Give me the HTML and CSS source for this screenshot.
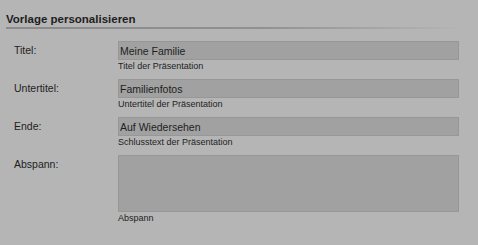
FILE: index.html
```html
<!DOCTYPE html>
<html>
    <link rel="stylesheet" href="styles.css">
    <head>
        <title>Vorlage personalisieren</title>
    </head>
    <body>
        <div class="panel">
            <h2 class="panel__title">Vorlage personalisieren</h2>
            <div class="panel__rule"></div>

            <div class="form">
                <label class="form__label" for="titel">Titel:</label>
                <div class="form__field">
                    <input type="text" class="form__input" id="titel" value="Meine Familie">
                    <div class="form__hint">Titel der Präsentation</div>
                </div>

                <label class="form__label" for="untertitel">Untertitel:</label>
                <div class="form__field">
                    <input type="text" class="form__input" id="untertitel" value="Familienfotos">
                    <div class="form__hint">Untertitel der Präsentation</div>
                </div>

                <label class="form__label" for="ende">Ende:</label>
                <div class="form__field">
                    <input type="text" class="form__input" id="ende" value="Auf Wiedersehen">
                    <div class="form__hint">Schlusstext der Präsentation</div>
                </div>

                <label class="form__label" for="abspann">Abspann:</label>
                <div class="form__field">
                    <textarea class="form__input form__input--area" id="abspann"></textarea>
                    <div class="form__hint">Abspann</div>
                </div>
            </div>
        </div>
    </body>
</html>
```

FILE: styles.css
```css
body{
    margin: 0;
    background: #b5b5b5;
    color: #1e1e1e;
    font-family: "Liberation Sans", Arial, sans-serif;
}
.panel{
    padding: 12px 0 0 6px;
}
.panel__title{
    margin: 0;
    font-size: 11.5px;
    font-weight: bold;
    line-height: 14px;
}
.panel__rule{
    width: 455px;
    height: 2px;
    margin-top: 1px;
    background: linear-gradient(to right, #8b8b8b 0%, #909090 55%, #b5b5b5 100%);
}
.form{
    display: grid;
    grid-template-columns: 104px 341px;
    row-gap: 7px;
    margin: 12px 0 0 8px;
}
.form__label{
    margin-top: 1px;
    font-size: 10.5px;
    line-height: 17px;
}
.form__field{
    display: flex;
    flex-direction: column;
}
.form__input{
    box-sizing: border-box;
    width: 100%;
    height: 19px;
    margin: 0;
    padding: 0 1px;
    border: 1px solid #979797;
    background: #a1a1a1;
    color: #1e1e1e;
    font-family: inherit;
    font-size: 10.5px;
    line-height: 17px;
    outline: none;
}
.form__input--area{
    height: 57px;
    resize: none;
    display: block;
}
.form__hint{
    margin-top: 1px;
    font-size: 9px;
    line-height: 11px;
}
```
